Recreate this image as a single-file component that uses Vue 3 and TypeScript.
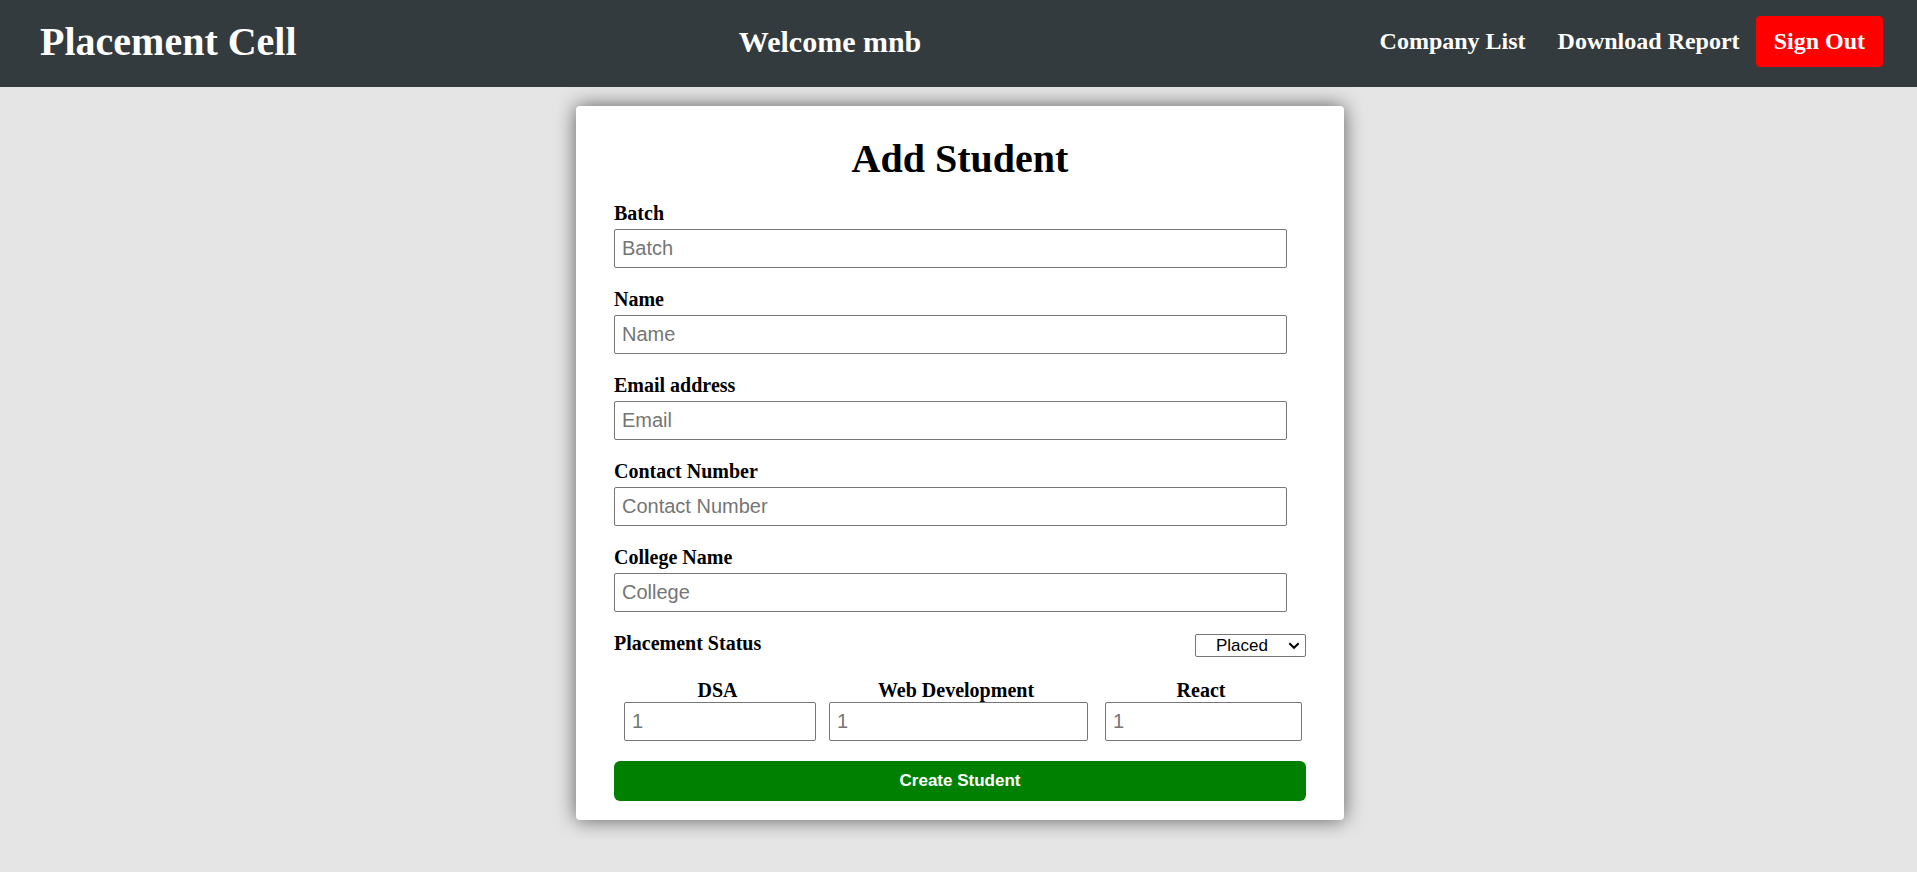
<script setup lang="ts">
import { ref } from 'vue'

interface Field {
  id: string
  label: string
  placeholder: string
  type: string
}

const fields: Field[] = [
  { id: 'batch', label: 'Batch', placeholder: 'Batch', type: 'text' },
  { id: 'name', label: 'Name', placeholder: 'Name', type: 'text' },
  { id: 'email', label: 'Email address', placeholder: 'Email', type: 'email' },
  { id: 'contact', label: 'Contact Number', placeholder: 'Contact Number', type: 'tel' },
  { id: 'college', label: 'College Name', placeholder: 'College', type: 'text' },
]

const scores = [
  { id: 'dsa', label: 'DSA' },
  { id: 'web', label: 'Web Development' },
  { id: 'react', label: 'React' },
]

const values = ref<Record<string, string>>({})
const status = ref('Placed')
</script>

<template>
  <div class="page">
    <header class="navbar">
      <a class="brand" href="#">Placement Cell</a>
      <h2 class="welcome">Welcome mnb</h2>
      <nav class="links">
        <a class="link" href="#">Company List</a>
        <a class="link" href="#">Download Report</a>
        <a class="sign-out" href="#">Sign Out</a>
      </nav>
    </header>

    <main class="content">
      <form class="card" @submit.prevent>
        <h1 class="title">Add Student</h1>

        <div v-for="field in fields" :key="field.id" class="field">
          <label :for="field.id">{{ field.label }}</label>
          <input :id="field.id" v-model="values[field.id]" :type="field.type" :placeholder="field.placeholder" />
        </div>

        <div class="status">
          <label for="status">Placement Status</label>
          <div class="select">
            <select id="status" v-model="status">
              <option>Placed</option>
              <option>Not Placed</option>
            </select>
            <svg class="arrow" width="12" height="8" viewBox="0 0 12 8" aria-hidden="true">
              <path d="M1.3 1.3 L6 5.8 L10.7 1.3" fill="none" stroke="#000" stroke-width="2" />
            </svg>
          </div>
        </div>

        <div class="scores">
          <div v-for="score in scores" :key="score.id" class="score" :class="score.id">
            <label :for="score.id">{{ score.label }}</label>
            <input :id="score.id" v-model="values[score.id]" type="text" inputmode="numeric" placeholder="1" />
          </div>
        </div>

        <button class="submit" type="submit">Create Student</button>
      </form>
    </main>
  </div>
</template>

<style>
body {
  margin: 0;
  background: #e5e5e5;
}
</style>

<style scoped>
.page {
  font-family: "Liberation Serif", "Times New Roman", serif;
  color: #000;
}

.navbar {
  position: relative;
  z-index: 1;
  display: flex;
  align-items: center;
  justify-content: space-between;
  padding: 16px 34px 20px 40px;
  background: #343b3e;
  color: #fff;
  font-weight: bold;
}

.navbar a {
  color: inherit;
  text-decoration: none;
}

.navbar .brand {
  font-size: 40px;
  line-height: 46px;
}

.welcome {
  margin: 0;
  font-size: 30px;
  line-height: 34px;
}

.links {
  display: flex;
  align-items: center;
  font-size: 24px;
  line-height: 27px;
}

.link {
  padding: 12px 16px;
}

.sign-out {
  padding: 12px 18px;
  border-radius: 4px;
  background: #f00;
}

.content {
  display: flex;
  justify-content: center;
  padding: 19px 0 19px 3px;
}

.card {
  box-sizing: border-box;
  width: 768px;
  max-width: 100%;
  padding: 30px 38px 19px;
  border-radius: 4px;
  background: #fff;
  box-shadow: 0 0 20px rgba(0, 0, 0, 0.6);
}

.title {
  margin: 0 0 20px;
  font-size: 40px;
  line-height: 46px;
  text-align: center;
}

label {
  font-size: 20px;
  font-weight: bold;
  line-height: 23px;
}

input {
  box-sizing: border-box;
  width: 100%;
  height: 39px;
  padding: 7px;
  border: 1px solid #767676;
  border-radius: 2px;
  background: #fff;
  font-family: "Liberation Sans", Arial, sans-serif;
  font-size: 20px;
}

input::placeholder {
  color: #757575;
}

.field {
  display: flex;
  flex-direction: column;
  gap: 4px;
  margin-bottom: 20px;
  padding-right: 19px;
}

.status {
  display: flex;
  align-items: flex-start;
  justify-content: space-between;
  margin-bottom: 22px;
}

.select {
  position: relative;
  display: flex;
  margin-top: 2px;
}

.select select {
  appearance: none;
  width: 111px;
  height: 23px;
  padding: 0 17px 0 0;
  border: 1px solid #767676;
  border-radius: 2px;
  background-color: #fff;
  color: #000;
  font-family: "Liberation Sans", Arial, sans-serif;
  font-size: 17px;
  text-align: center;
}

.arrow {
  position: absolute;
  top: 8px;
  right: 6px;
  pointer-events: none;
}

.scores {
  display: grid;
  grid-template-columns: 192fr 263fr 197fr;
  gap: 13px;
  margin: 0 4px 20px 10px;
}

.score {
  display: flex;
  flex-direction: column;
}

.score.web {
  padding-right: 4px;
}

.score label {
  padding-right: 5px;
  text-align: center;
}

.submit {
  display: block;
  width: 100%;
  height: 40px;
  border: 0;
  border-radius: 6px;
  background: #008000;
  color: #fff;
  font-family: "Liberation Sans", Arial, sans-serif;
  font-size: 17px;
  font-weight: bold;
}
</style>
